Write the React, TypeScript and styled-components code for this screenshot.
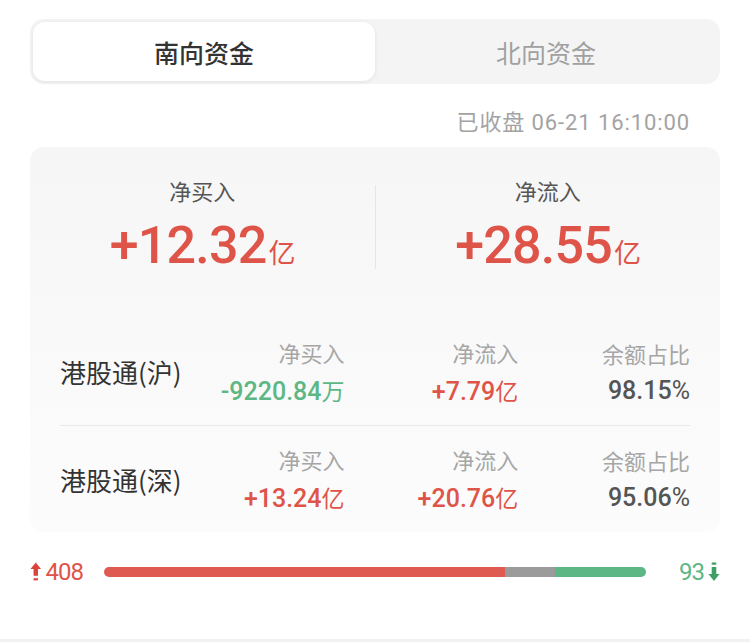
import React from "react";
import styled, { createGlobalStyle } from "styled-components";

const Global = createGlobalStyle`
  html, body { margin: 0; padding: 0; background: #fff; }
  body { font-family: "Noto Sans CJK SC", "Noto Sans", sans-serif; }
  * { box-sizing: border-box; }
`;

const RED = "#df5449";
const GREEN = "#5db784";

const Page = styled.div`
  width: 750px;
  height: 642px;
  padding: 19px 30px 0;
  display: flex;
  flex-direction: column;
  border-bottom: 3px solid #f2f2f2;
`;

const Tabs = styled.div`
  height: 65px;
  background: #f4f4f4;
  border-radius: 14px;
  padding: 3px;
  display: flex;
`;

const Tab = styled.div<{ $active?: boolean }>`
  flex: 1;
  display: flex;
  align-items: center;
  justify-content: center;
  border-radius: 12px;
  font-size: 25px;
  font-weight: ${(p) => (p.$active ? 500 : 400)};
  color: ${(p) => (p.$active ? "#333" : "#a0a0a0")};
  background: ${(p) => (p.$active ? "#fff" : "transparent")};
  box-shadow: ${(p) => (p.$active ? "0 1px 4px rgba(0,0,0,0.08)" : "none")};
`;

const Stamp = styled.div`
  height: 63px;
  display: flex;
  align-items: center;
  justify-content: flex-end;
  padding-right: 30px;
  padding-top: 9px;
  font-size: 22px;
  color: #a3a3a3;
  font-family: "Roboto", "Noto Sans CJK SC", sans-serif;
  letter-spacing: 0.9px;
`;

const Card = styled.div`
  height: 385px;
  border-radius: 14px;
  background: linear-gradient(#f6f6f6, #fcfcfc);
  display: flex;
  flex-direction: column;
`;

const Summary = styled.div`
  display: flex;
  align-items: flex-start;
  padding-top: 28px;
  height: 171px;
`;

const SumCol = styled.div`
  flex: 1;
  display: flex;
  flex-direction: column;
  align-items: center;
`;

const VLine = styled.div`
  width: 1px;
  height: 84px;
  background: #e6e6e6;
  margin-top: 10px;
`;

const SumLabel = styled.div`
  font-size: 22px;
  color: #555;
  line-height: 30px;
`;

const BigValue = styled.div<{ $color: string }>`
  margin-top: 15px;
  color: ${(p) => p.$color};
  font-family: "Roboto", sans-serif;
  font-weight: 500;
  font-size: 52px;
  line-height: 52px;
  letter-spacing: -0.8px;
  display: flex;
  align-items: baseline;
`;

const BigUnit = styled.span`
  font-family: "Noto Sans CJK SC", sans-serif;
  font-weight: 400;
  font-size: 27px;
  margin-left: 2px;
`;

const Rows = styled.div`
  padding: 0 30px;
  display: flex;
  flex-direction: column;
`;

const Row = styled.div<{ $divider?: boolean }>`
  height: 107px;
  display: flex;
  align-items: center;
  border-top: ${(p) => (p.$divider ? "1px solid #e8e8e8" : "none")};
`;

const RowName = styled.div`
  width: 150px;
  font-size: 26px;
  color: #333;
`;

const Cell = styled.div<{ $w: number }>`
  width: ${(p) => p.$w}px;
  display: flex;
  flex-direction: column;
  align-items: flex-end;
`;

const CellLabel = styled.div`
  font-size: 22px;
  color: #a6a6a6;
  line-height: 30px;
`;

const CellValue = styled.div<{ $color: string }>`
  margin-top: 8px;
  font-family: "Roboto", sans-serif;
  font-weight: 500;
  font-size: 25px;
  line-height: 30px;
  color: ${(p) => p.$color};
  display: flex;
  align-items: baseline;
`;

const CellUnit = styled.span`
  font-family: "Noto Sans CJK SC", sans-serif;
  font-weight: 400;
  font-size: 23px;
`;

const Pct = styled.span`
  font-weight: 400;
`;

const BarRow = styled.div`
  display: flex;
  align-items: center;
  height: 80px;
`;

const Count = styled.div<{ $color: string; $w: number; $end?: boolean }>`
  width: ${(p) => p.$w}px;
  display: flex;
  align-items: center;
  justify-content: ${(p) => (p.$end ? "flex-end" : "flex-start")};
  gap: 4px;
  color: ${(p) => p.$color};
  font-family: "Roboto", sans-serif;
  font-size: 24px;
  letter-spacing: -1px;
`;

const Bar = styled.div`
  flex: 1;
  height: 10px;
  border-radius: 5px;
  overflow: hidden;
  display: flex;
  margin: 0 0 0 21px;
`;

const Seg = styled.div<{ $color: string }>`
  height: 100%;
  background: ${(p) => p.$color};
`;

const UpArrow = ({ color }: { color: string }) => (
  <svg width="12" height="22" viewBox="0 0 12 22">
    <path d="M6 1 L11.5 8 H8.3 V15 H3.7 V8 H0.5 Z" fill={color} />
    <rect x="3.7" y="17.5" width="4.6" height="2.2" fill={color} />
  </svg>
);

const DownArrow = ({ color }: { color: string }) => (
  <svg width="12" height="22" viewBox="0 0 12 22">
    <rect x="3.7" y="1.5" width="4.6" height="2.2" fill={color} />
    <path d="M3.7 6 H8.3 V13 H11.5 L6 20 L0.5 13 H3.7 Z" fill={color} />
  </svg>
);

type Val = { num: string; unit: string; color: string };

const rows: { name: string; cells: Val[] }[] = [
  {
    name: "港股通(沪)",
    cells: [
      { num: "-9220.84", unit: "万", color: GREEN },
      { num: "+7.79", unit: "亿", color: RED },
      { num: "98.15", unit: "%", color: "#555" },
    ],
  },
  {
    name: "港股通(深)",
    cells: [
      { num: "+13.24", unit: "亿", color: RED },
      { num: "+20.76", unit: "亿", color: RED },
      { num: "95.06", unit: "%", color: "#555" },
    ],
  },
];

const labels = ["净买入", "净流入", "余额占比"];
const widths = [135, 174, 172];

export default function App() {
  const up = 408;
  const flat = 50;
  const down = 93;
  const total = up + flat + down;
  return (
    <>
      <Global />
      <Page>
        <Tabs>
          <Tab $active>南向资金</Tab>
          <Tab>北向资金</Tab>
        </Tabs>
        <Stamp>已收盘 06-21 16:10:00</Stamp>
        <Card>
          <Summary>
            <SumCol>
              <SumLabel>净买入</SumLabel>
              <BigValue $color={RED}>
                +12.32<BigUnit>亿</BigUnit>
              </BigValue>
            </SumCol>
            <VLine />
            <SumCol>
              <SumLabel>净流入</SumLabel>
              <BigValue $color={RED}>
                +28.55<BigUnit>亿</BigUnit>
              </BigValue>
            </SumCol>
          </Summary>
          <Rows>
            {rows.map((r, i) => (
              <Row key={r.name} $divider={i > 0}>
                <RowName>{r.name}</RowName>
                {r.cells.map((c, j) => (
                  <Cell key={j} $w={widths[j]}>
                    <CellLabel>{labels[j]}</CellLabel>
                    <CellValue $color={c.color}>
                      {c.num}
                      {c.unit === "%" ? <Pct>%</Pct> : <CellUnit>{c.unit}</CellUnit>}
                    </CellValue>
                  </Cell>
                ))}
              </Row>
            ))}
          </Rows>
        </Card>
        <BarRow>
          <Count $color={RED} $w={53}>
            <UpArrow color="#d9433a" />
            {up}
          </Count>
          <Bar>
            <Seg $color="#df5a50" style={{ width: `${(up / total) * 100}%` }} />
            <Seg $color="#9b9b9b" style={{ width: `${(flat / total) * 100}%` }} />
            <Seg $color={GREEN} style={{ width: `${(down / total) * 100}%` }} />
          </Bar>
          <Count $color={GREEN} $w={74} $end>
            {down}
            <DownArrow color="#3f9e63" />
          </Count>
        </BarRow>
      </Page>
    </>
  );
}
